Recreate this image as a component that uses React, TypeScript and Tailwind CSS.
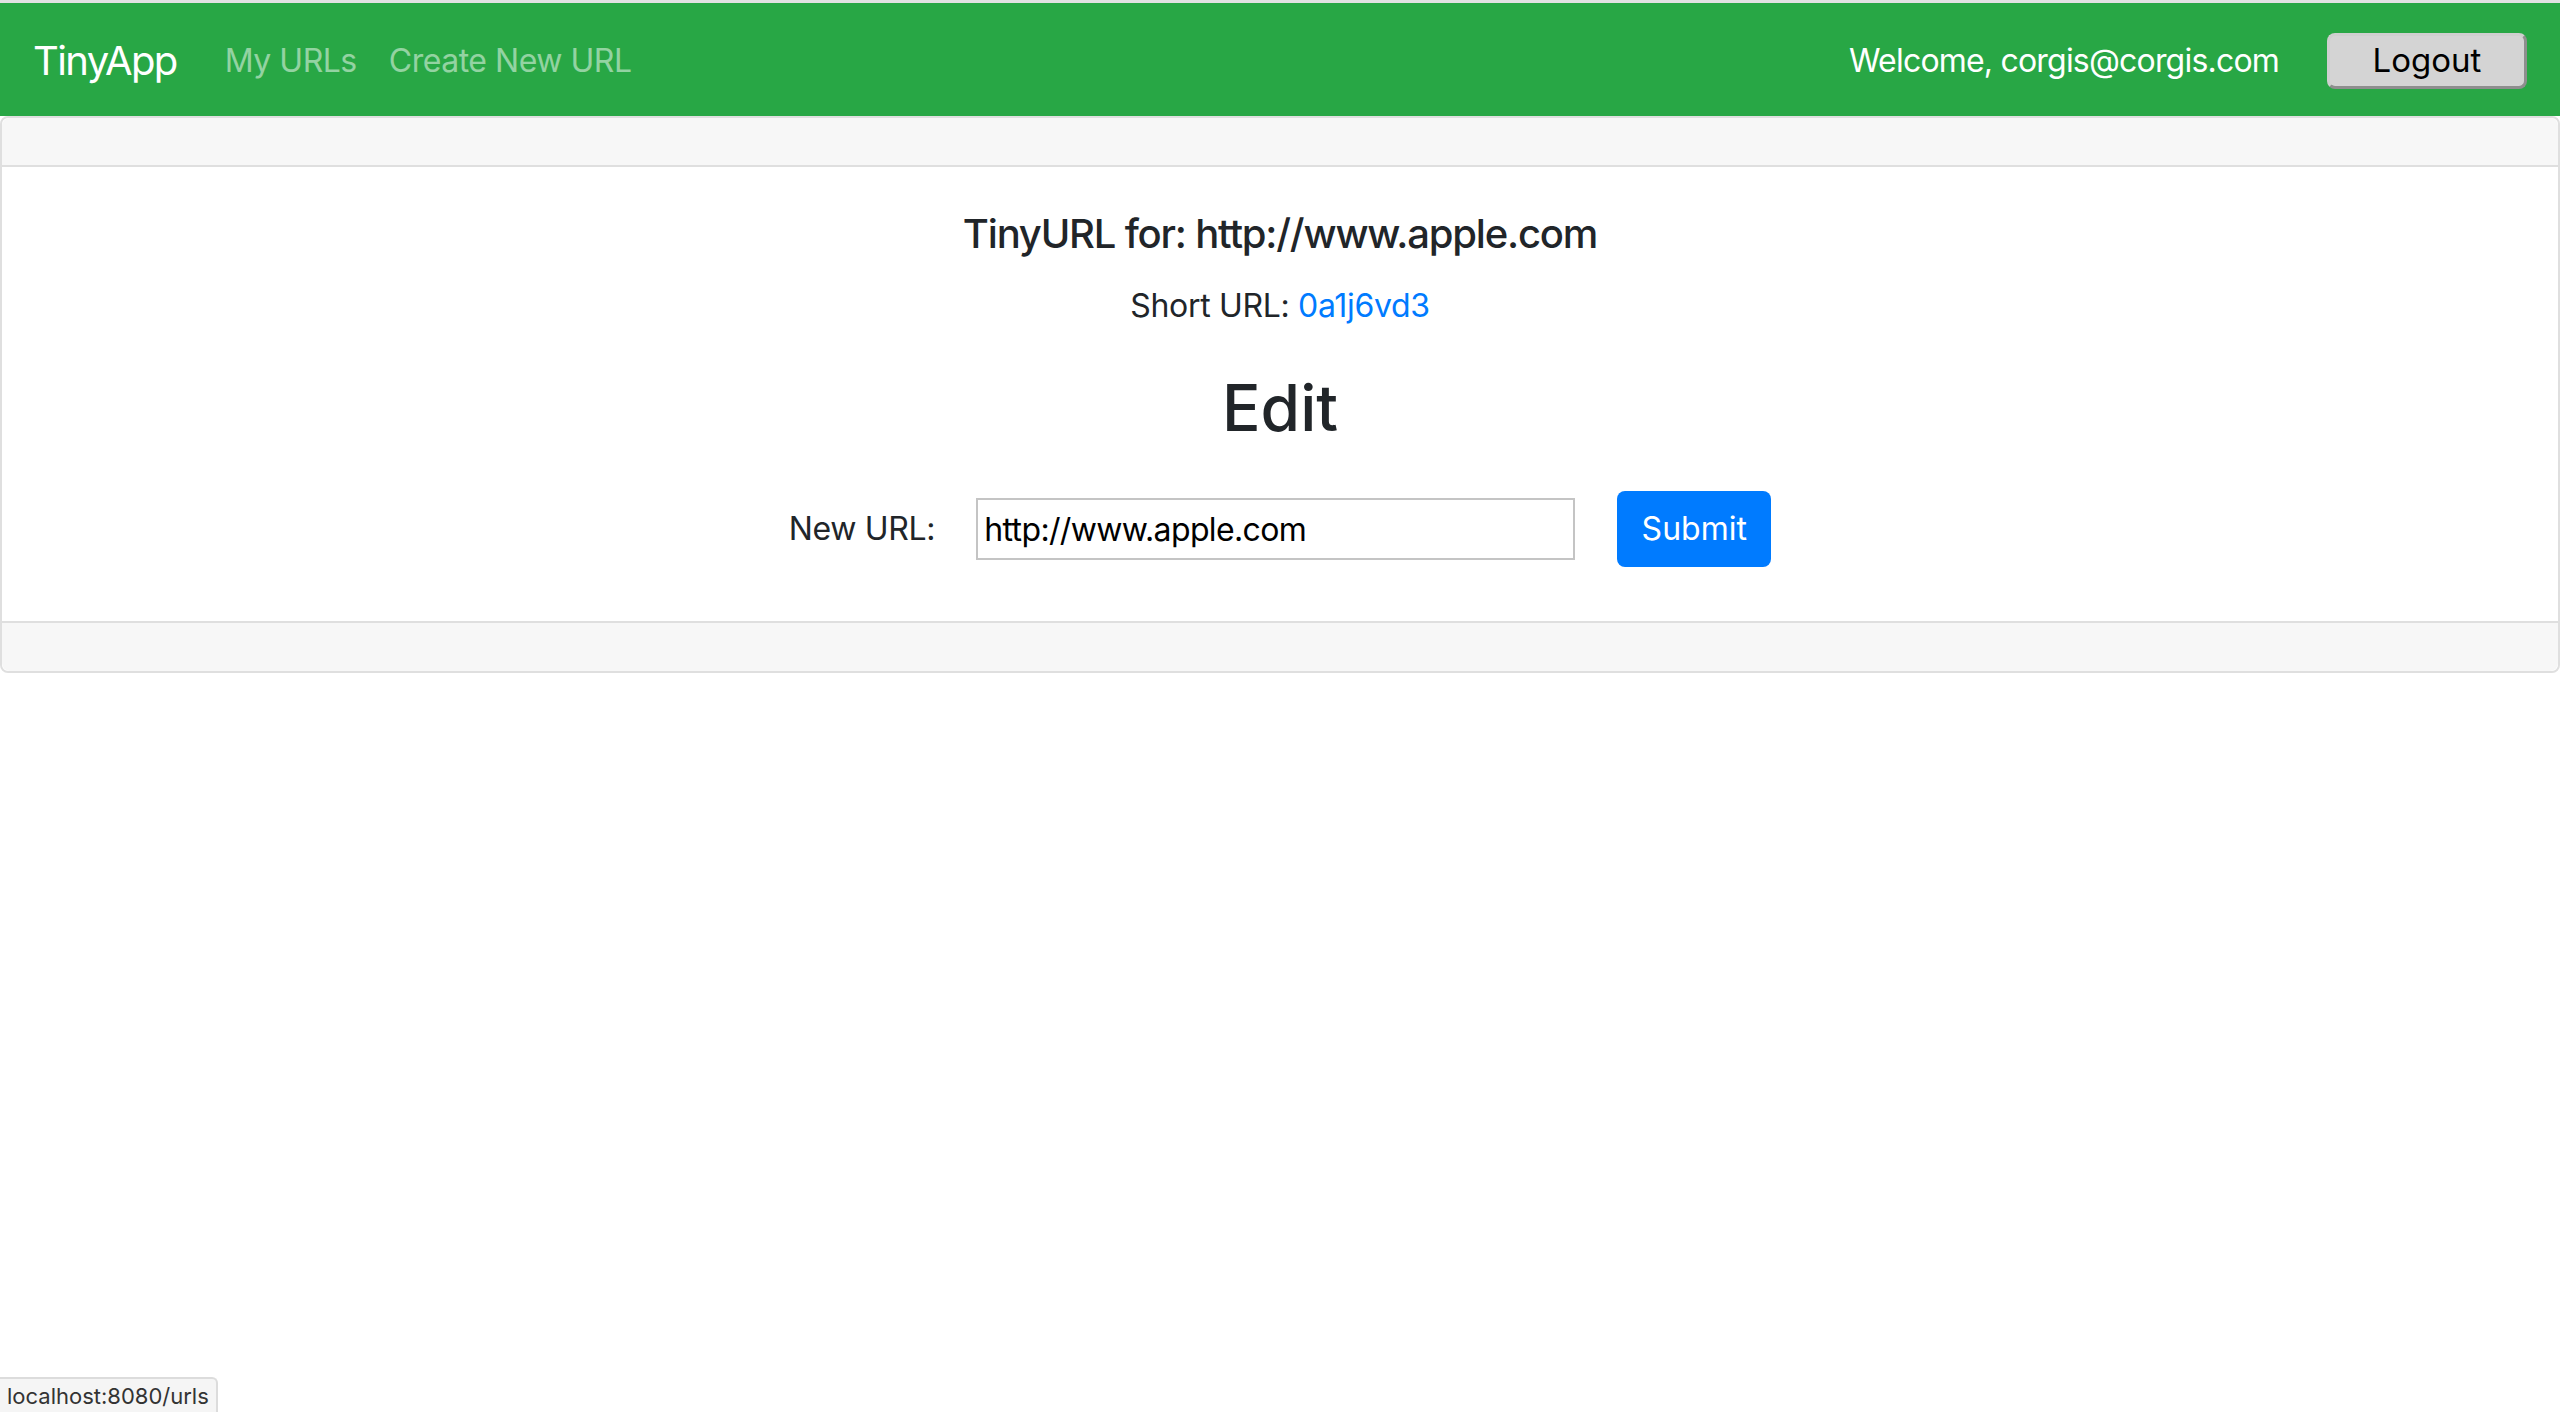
import React from "react";

const font = { fontFamily: "Inter, 'Noto Sans', sans-serif" };

function Navbar() {
  return (
    <nav className="flex h-[113px] items-center bg-[#28a745] px-[33px] pt-[2px]">
      <a className="mr-[32px] text-[40px] leading-none tracking-[-0.04em] text-white">TinyApp</a>
      <div className="flex items-center tracking-[-0.03em]">
        <a className="px-[16px] text-[32px] text-white/50">My URLs</a>
        <a className="px-[16px] text-[32px] text-white/50">Create New URL</a>
      </div>
      <div className="ml-auto flex items-center">
        <span className="text-[32px] tracking-[-0.025em] text-white">Welcome, corgis@corgis.com</span>
        <button className="ml-[48px] h-[56px] w-[200px] rounded-[8px] border-[3px] border-t-[#cfcfcf] border-l-[#cfcfcf] border-r-[#8e8e8e] border-b-[#8e8e8e] bg-[#d4d4d4] text-[33px] text-black">
          Logout
        </button>
      </div>
    </nav>
  );
}

function EditCard() {
  return (
    <div className="rounded-[8px] border-2 border-[#dfdfdf]">
      <div className="h-[49px] rounded-t-[8px] border-b-2 border-[#dfdfdf] bg-[#f7f7f7]" />
      <div className="flex flex-col items-center px-[40px] pt-[43px] pb-[54px] text-[#212529]">
        <h5 className="text-[40px] font-medium leading-[48px] tracking-[-0.03em]">TinyURL for: http://www.apple.com</h5>
        <p className="mt-[24px] text-[32px] leading-[48px] tracking-[-0.01em]">
          Short URL: <a className="text-[#007bff]">0a1j6vd3</a>
        </p>
        <h2 className="mt-[39px] text-[64px] font-medium leading-[77px]">Edit</h2>
        <form className="mt-[45px] flex items-center" onSubmit={(e) => e.preventDefault()}>
          <label className="text-[32px] tracking-[-0.01em]">New URL:</label>
          <input
            className="ml-[41px] h-[62px] w-[599px] border-2 border-[#c4c4c4] px-[6px] text-[32px] tracking-[-0.02em] text-black outline-none"
            defaultValue="http://www.apple.com"
          />
          <button className="ml-[42px] h-[76px] w-[154px] rounded-[8px] bg-[#007bff] text-[32px] text-white">
            Submit
          </button>
        </form>
      </div>
      <div className="h-[50px] rounded-b-[8px] border-t-2 border-[#dfdfdf] bg-[#f7f7f7]" />
    </div>
  );
}

export default function App() {
  return (
    <div className="relative min-h-[1412px] bg-white" style={font}>
      <div className="h-[3px] bg-[#e2e2e2]" />
      <Navbar />
      <EditCard />

      {/* Status bar */}
      <div className="absolute bottom-0 left-0 rounded-tr-[6px] border-t-2 border-r-2 border-[#dcdcdc] bg-[#f5f5f5] px-[7px] pt-[1px] text-[22px] leading-[32px] text-[#333]">
        localhost:8080/urls
      </div>
    </div>
  );
}
